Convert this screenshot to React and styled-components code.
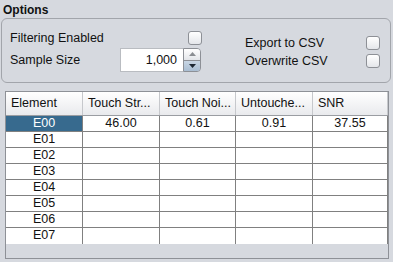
import React from "react";
import styled, { createGlobalStyle } from "styled-components";

const GlobalStyle = createGlobalStyle`
  html, body { margin: 0; padding: 0; background: #d6d9df; }
  body { font-family: "Liberation Sans", Arial, sans-serif; font-size: 12px; color: #111; }
`;

const Page = styled.div`
  width: 393px;
  height: 262px;
  background: #d6d9df;
  box-sizing: border-box;
  padding-top: 3px;
  overflow: hidden;
`;

const Title = styled.div`
  font-weight: 700;
  font-size: 12px;
  line-height: 14px;
  padding-left: 3px;
  height: 15px;
`;

const GroupBox = styled.div`
  margin-left: 1px;
  width: 390px;
  height: 65px;
  box-sizing: border-box;
  border: 1px solid #a2a5ab;
  border-radius: 6px;
  display: grid;
  grid-template-columns: 233px 1fr;
`;

const Column = styled.div`
  display: flex;
  flex-direction: column;
  gap: ${(p) => p.$gap}px;
  padding-top: ${(p) => p.$top}px;
  padding-left: ${(p) => p.$left}px;
`;

const Row = styled.div`
  display: flex;
  align-items: center;
  height: ${(p) => p.$h}px;
`;

const Label = styled.span`
  width: ${(p) => p.$w}px;
  font-size: 12.5px;
  white-space: nowrap;
`;

const CheckBox = styled.span`
  display: block;
  width: 12px;
  height: 12px;
  margin-left: ${(p) => p.$ml || 0}px;
  border: 1px solid #8d9096;
  border-radius: 3px;
  background: linear-gradient(#ffffff, #e4e6ea);
`;

const Spinner = styled.div`
  display: flex;
  height: 24px;
`;

const Field = styled.div`
  width: 63px;
  box-sizing: border-box;
  background: #fff;
  border: 1px solid #b9bcc1;
  border-right: none;
  text-align: right;
  padding-right: 6px;
  font-size: 12.5px;
  line-height: 22px;
`;

const SpinButtons = styled.div`
  width: 16px;
  display: flex;
  flex-direction: column;
  border: 1px solid #8d9096;
  border-radius: 0 4px 4px 0;
  overflow: hidden;
`;

const SpinButton = styled.div`
  flex: 1;
  display: flex;
  align-items: center;
  justify-content: center;
  background: ${(p) => (p.$down ? "linear-gradient(#c9d6e4, #a9bdd2)" : "linear-gradient(#ffffff, #e3e5e9)")};
  border-top: ${(p) => (p.$down ? "1px solid #8d9096" : "none")};
  svg { display: block; }
`;

const TablePanel = styled.div`
  margin: 8px 0 0 5px;
  width: 384px;
  height: 168px;
  box-sizing: border-box;
  border: 1px solid #8e9197;
  background: #d6d9df;
`;

const HeaderRow = styled.div`
  display: flex;
  height: 23px;
  background: linear-gradient(#ffffff, #e9eaed);
  border-bottom: 1px solid #9a9da2;
`;

const HeaderCell = styled.div`
  width: ${(p) => p.$w}px;
  box-sizing: border-box;
  border-right: 1px solid #c6c8cc;
  padding-left: 5px;
  font-size: 12.5px;
  line-height: 23px;
  white-space: nowrap;
  overflow: hidden;
`;

const BodyRow = styled.div`
  display: flex;
  height: 16px;
  box-sizing: border-box;
  background: #fff;
  border-bottom: ${(p) => (p.$last ? "none" : "1px solid #808080")};
`;

const Cell = styled.div`
  width: ${(p) => p.$w}px;
  box-sizing: border-box;
  border-right: 1px solid #808080;
  text-align: center;
  font-size: 12.5px;
  line-height: 15px;
  background: ${(p) => (p.$selected ? "#376a8e" : "transparent")};
  color: ${(p) => (p.$selected ? "#fff" : "#111")};
`;

const widths = [77, 77, 76, 77, 75];
const headers = ["Element", "Touch Str...", "Touch Noi...", "Untouche...", "SNR"];
const rows = [
  ["E00", "46.00", "0.61", "0.91", "37.55"],
  ["E01", "", "", "", ""],
  ["E02", "", "", "", ""],
  ["E03", "", "", "", ""],
  ["E04", "", "", "", ""],
  ["E05", "", "", "", ""],
  ["E06", "", "", "", ""],
  ["E07", "", "", "", ""],
];

const App = () => (
  <Page>
    <GlobalStyle />
    <Title>Options</Title>
    <GroupBox>
      <Column $top={12} $left={8} $gap={3}>
        <Row $h={14}>
          <Label $w={178}>Filtering Enabled</Label>
          <CheckBox />
        </Row>
        <Row $h={24}>
          <Label $w={110}>Sample Size</Label>
          <Spinner>
            <Field>1,000</Field>
            <SpinButtons>
              <SpinButton>
                <svg width="7" height="4" viewBox="0 0 7 4"><path d="M0 4 L3.5 0 L7 4 Z" fill="#8a8d92" /></svg>
              </SpinButton>
              <SpinButton $down>
                <svg width="7" height="4" viewBox="0 0 7 4"><path d="M0 0 L7 0 L3.5 4 Z" fill="#1d2733" /></svg>
              </SpinButton>
            </SpinButtons>
          </Spinner>
        </Row>
      </Column>
      <Column $top={17} $left={10} $gap={4}>
        <Row $h={14}>
          <Label $w={121}>Export to CSV</Label>
          <CheckBox />
        </Row>
        <Row $h={14}>
          <Label $w={121}>Overwrite CSV</Label>
          <CheckBox />
        </Row>
      </Column>
    </GroupBox>
    <TablePanel>
      <HeaderRow>
        {headers.map((h, i) => (
          <HeaderCell key={h} $w={widths[i]}>{h}</HeaderCell>
        ))}
      </HeaderRow>
      {rows.map((r, ri) => (
        <BodyRow key={r[0]} $last={ri === rows.length - 1}>
          {r.map((v, ci) => (
            <Cell key={ci} $w={widths[ci]} $selected={ri === 0 && ci === 0}>{v}</Cell>
          ))}
        </BodyRow>
      ))}
    </TablePanel>
  </Page>
);

export default App;
